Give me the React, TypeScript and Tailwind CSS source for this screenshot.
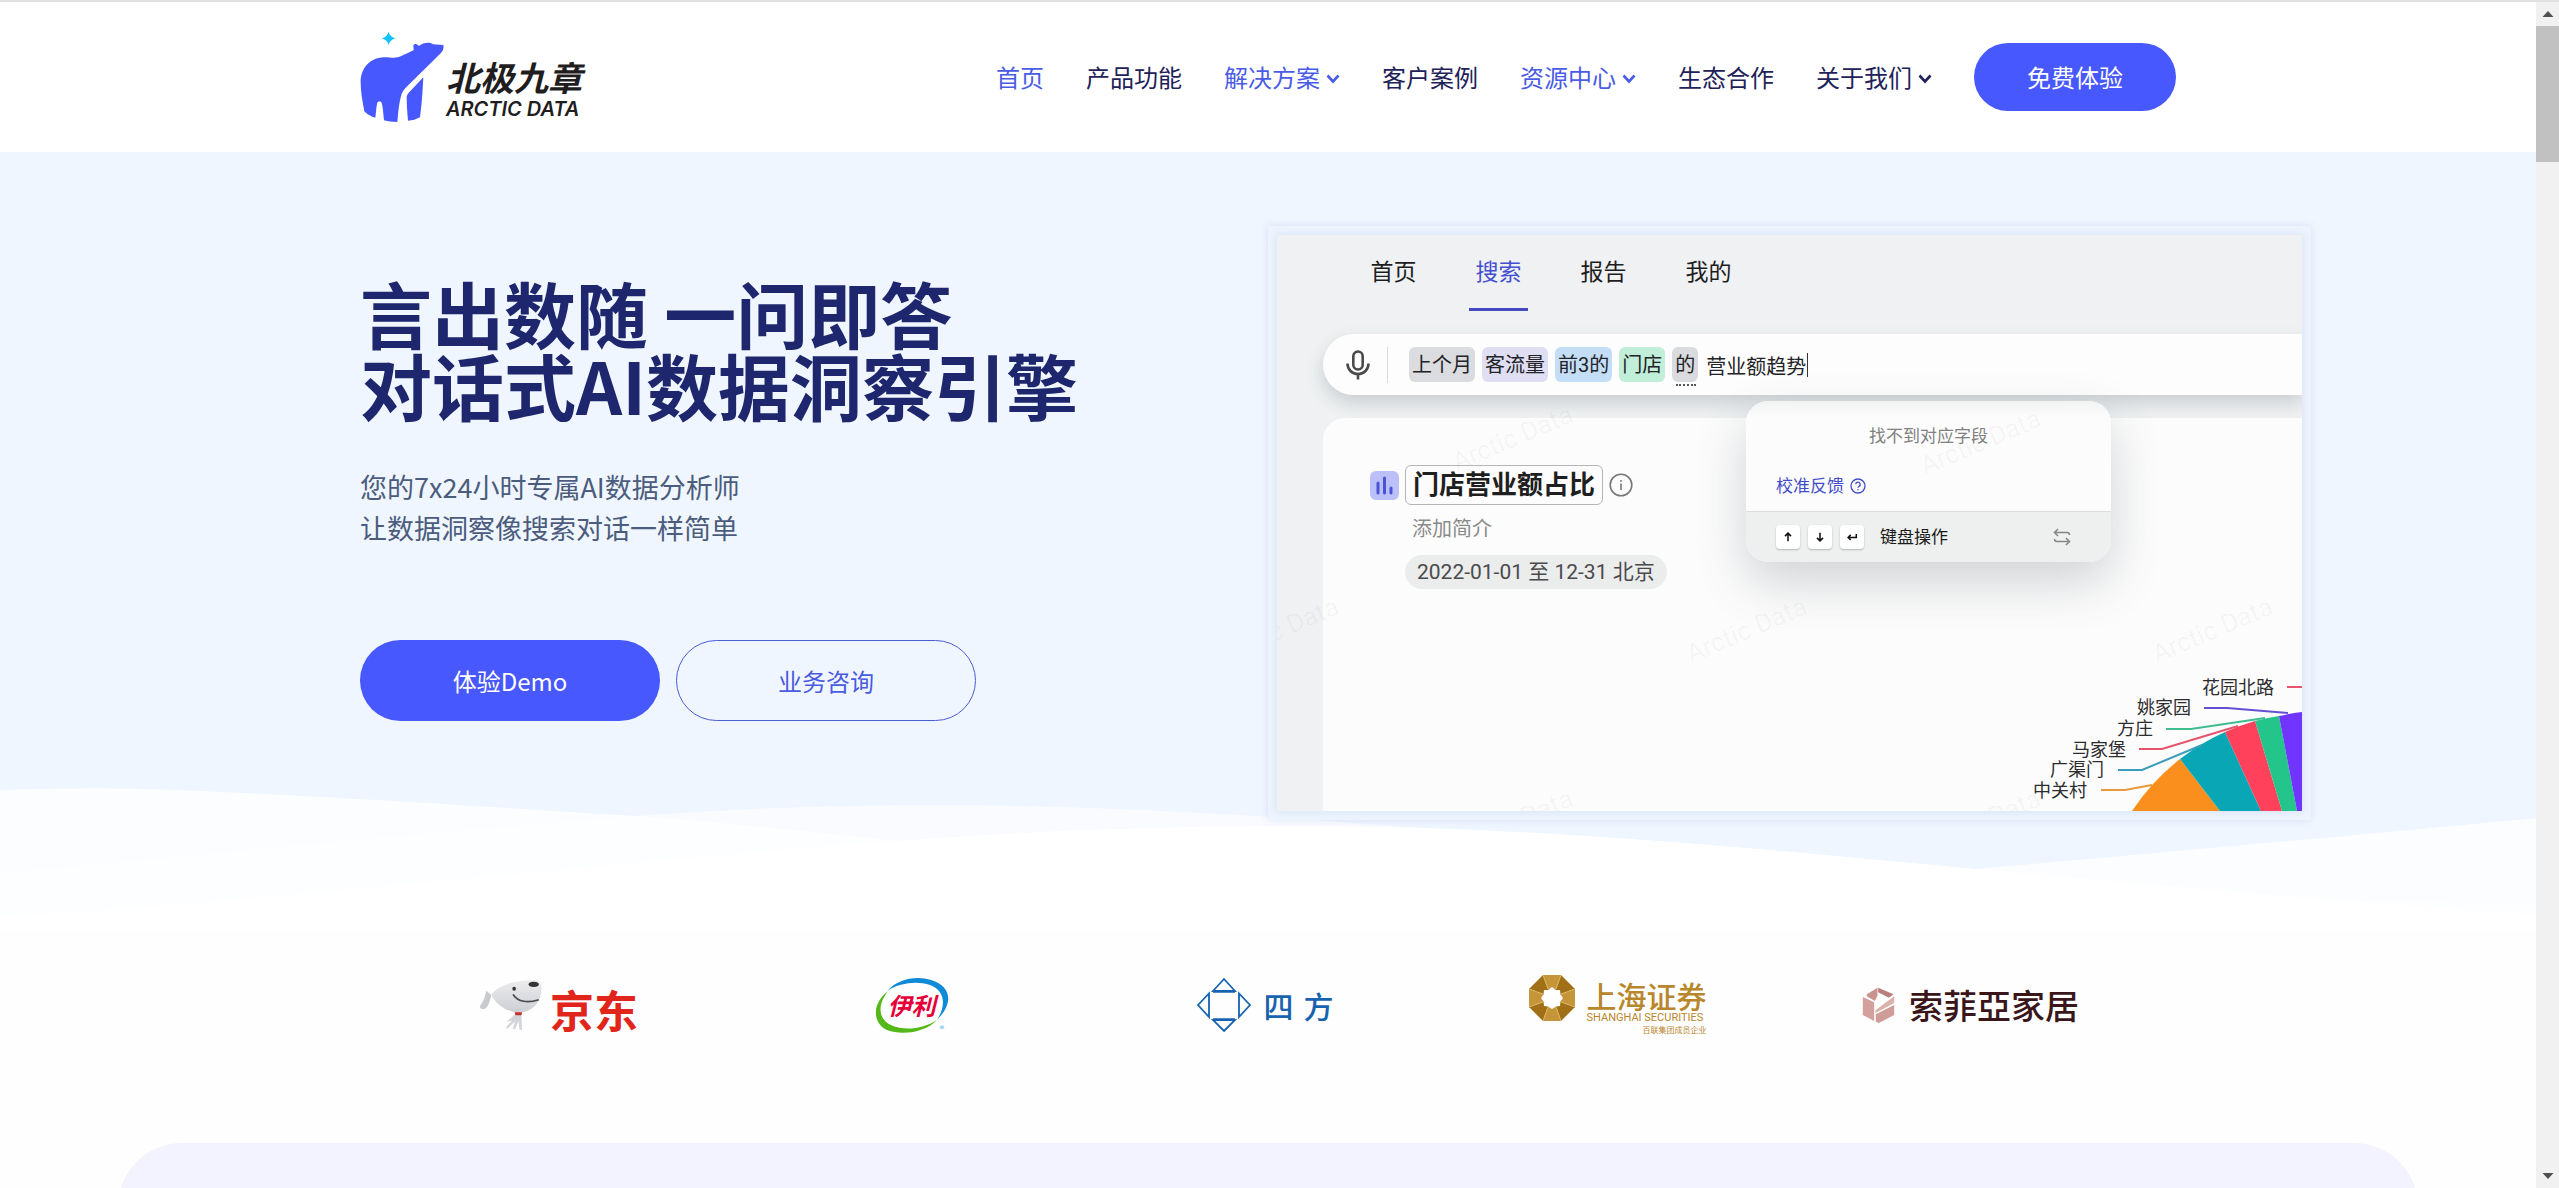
import { useState } from 'react'
import { clsx } from 'clsx'

const navItems = [
  { label: '首页', active: true },
  { label: '产品功能' },
  { label: '解决方案', active: true, menu: true },
  { label: '客户案例' },
  { label: '资源中心', active: true, menu: true },
  { label: '生态合作' },
  { label: '关于我们', menu: true },
]

const tabs = ['首页', '搜索', '报告', '我的']

const chips = [
  { text: '上个月', color: 'bg-[#dadce0]' },
  { text: '客流量', color: 'bg-[#dfdef3]' },
  { text: '前3的', color: 'bg-[#c5def8]' },
  { text: '门店', color: 'bg-[#c0eed8]' },
  { text: '的', color: 'bg-[#d9dbdf]', dotted: true },
]

const pieLabels = [
  { text: '花园北路', x: 244, y: 13, color: '#e8566d', line: '257,12 273,12' },
  { text: '姚家园', x: 161, y: 33, color: '#6450d2', line: '174,33 197,33 258,38' },
  { text: '方庄', x: 123, y: 54, color: '#3fbd8f', line: '136,54 161,54 235,43' },
  { text: '马家堡', x: 96, y: 75, color: '#e4546b', line: '109,74 132,74 208,51' },
  { text: '广渠门', x: 74, y: 95, color: '#3a9ebb', line: '88,95 112,95 172,70' },
  { text: '中关村', x: 57, y: 116, color: '#e99a3c', line: '71,115 95,115 122,110' },
]

const watermarks = [
  { x: 180, y: 236 },
  { x: 648, y: 240 },
  { x: -54, y: 428 },
  { x: 414, y: 428 },
  { x: 880, y: 428 },
  { x: 180, y: 620 },
  { x: 648, y: 620 },
]

function BearMark() {
  return (
    <svg className="w-[86px] h-[93px]" viewBox="61 93 258 279" aria-hidden="true">
      <path
        fill="#11c3fb"
        d="M147 95 Q150 111 168 115 Q150 119 147 136 Q143 119 126 115 Q143 111 147 95Z"
      />
      <path
        fill="#4758fe"
        d="M63 247C63 205 90 174 132 172C152 171 165 177 183 169C199 162 211 155 222 151L221 136C225 129 232 131 238 138C251 128 268 125 280 133L311 135C313 146 310 153 303 160L195 266C181 280 177 322 173 366C158 366 145 364 133 361C131 342 130 322 126 308C124 303 115 303 113 308C109 322 109 340 107 353C95 350 83 344 74 334C68 302 63 275 63 247Z"
      />
      <path
        fill="#4758fe"
        d="M251 232C249 272 246 318 241 352C230 358 218 362 205 362C203 338 201 316 201 291C202 284 205 280 210 275Z"
      />
    </svg>
  )
}

function Chevron() {
  return (
    <svg className="w-3.5 h-2.5 mt-1" viewBox="0 0 14 10" fill="none" stroke="currentColor" strokeWidth="2.6" aria-hidden="true">
      <path d="M1.5 1.5L7 7.5L12.5 1.5" />
    </svg>
  )
}

function Header() {
  return (
    <header className="bg-white border-t-2 border-[#e1e1e1]">
      <div className="max-w-[1816px] h-[150px] mx-auto flex items-center justify-between">
        <a href="#home" className="flex items-end">
          <BearMark />
          <span className="flex flex-col pb-[3px] text-[#1f1d1e] italic">
            <span className="text-[34px] leading-[40px] font-bold">北极九章</span>
            <span className="font-['Inter'] text-xl leading-6 font-semibold">ARCTIC DATA</span>
          </span>
        </a>
        <nav className="flex items-center gap-[42px]">
          {navItems.map((item) => (
            <a
              key={item.label}
              href="#nav"
              className={clsx(
                'flex items-center gap-1.5 text-2xl whitespace-nowrap',
                item.active ? 'text-[#4a5be6]' : 'text-[#1e2259]'
              )}
            >
              {item.label}
              {item.menu && <Chevron />}
            </a>
          ))}
          <button className="w-[202px] h-[68px] rounded-full bg-[#4758fe] text-white text-2xl">免费体验</button>
        </nav>
      </div>
    </header>
  )
}

function Waves() {
  return (
    <svg
      className="absolute left-0 bottom-0 w-full h-[145px]"
      viewBox="0 0 2536 145"
      preserveAspectRatio="none"
      aria-hidden="true"
    >
      <path
        fill="#fff"
        fillOpacity="0.75"
        d="M0 5C60 3 120 2 200 6C380 14 520 24 636 31C730 38 820 48 897 56C1200 90 1700 110 1975 84C2180 66 2380 48 2536 33V145H0Z"
      />
      <path
        fill="#fff"
        fillOpacity="0.6"
        d="M0 88C200 70 440 46 636 31C760 22 850 20 938 20C1100 20 1260 30 1420 43C1700 68 1900 92 2180 108C2330 116 2440 118 2536 118V145H0Z"
      />
      <path
        fill="#fff"
        d="M0 132C280 116 620 76 897 56C1060 44 1190 41 1305 41C1540 41 1780 66 1975 84C2180 102 2380 120 2536 130V145H0Z"
      />
    </svg>
  )
}

function PieChart() {
  return (
    <svg className="absolute right-0 bottom-0 w-[272px] h-[136px]" viewBox="0 0 272 136" role="img" aria-label="门店营业额占比">
      <path fill="#fa8f1e" d="M102 136A221 221 0 0 1 150 84L190 136Z" />
      <path fill="#09a7b6" d="M150 84A221 221 0 0 1 195 57L231 136H190Z" />
      <path fill="#ff415c" d="M195 57A221 221 0 0 1 225 46L252 136H231Z" />
      <path fill="#23c58b" d="M225 46A221 221 0 0 1 249 41L267 136H252Z" />
      <path fill="#7035ff" d="M249 41A221 221 0 0 1 272 37V136H267Z" />
      {pieLabels.map((label) => (
        <g key={label.text}>
          <polyline points={label.line} fill="none" stroke={label.color} strokeWidth="2" />
          <text x={label.x} y={label.y + 6} textAnchor="end" fontSize="18" fill="#2c2c2e">
            {label.text}
          </text>
        </g>
      ))}
    </svg>
  )
}

function Key({ d }: { d: string }) {
  return (
    <kbd className="w-6 h-6 rounded-sm bg-white shadow-[0_1px_2px_rgba(0,0,0,0.25)] flex items-center justify-center">
      <svg className="w-3 h-3" viewBox="0 0 14 14" fill="none" stroke="#111" strokeWidth="1.8" aria-hidden="true">
        <path d={d} />
      </svg>
    </kbd>
  )
}

function FieldPopup() {
  return (
    <div className="absolute left-[469px] top-[166px] w-[365px] rounded-[22px] bg-[#fcfcfc] shadow-[0_20px_50px_rgba(70,80,90,0.24)] overflow-hidden">
      <div className="h-[110px] px-[30px] pt-[23px] bg-linear-to-b from-[#f1f2f2] to-[#fcfcfc] to-15%">
        <p className="text-center text-[17px] leading-6 text-[#808080]">找不到对应字段</p>
        <a href="#feedback" className="mt-[26px] flex items-center gap-1.5 text-[17px] leading-6 text-[#434cc9]">
          校准反馈
          <svg className="w-4 h-4" viewBox="0 0 16 16" fill="none" stroke="currentColor" strokeWidth="1.3" aria-hidden="true">
            <circle cx="8" cy="8" r="7" />
            <path d="M5.8 6.3a2.2 2.2 0 1 1 3.2 2c-.7.4-1 .7-1 1.5M8 11v1.3" />
          </svg>
        </a>
      </div>
      <div className="h-[51px] px-[30px] border-t border-[#dcdddd] bg-[#eef0f0] flex items-center gap-2">
        <Key d="M7 12V2.5M3.5 6L7 2.5L10.5 6" />
        <Key d="M7 2V11.5M3.5 8L7 11.5L10.5 8" />
        <Key d="M12 3.5V7.5H2.5M5.5 4.5L2.5 7.5L5.5 10.5" />
        <span className="ml-2 text-[17px] leading-6 text-[#1a1a1a]">键盘操作</span>
        <svg className="ml-auto mr-2.5 w-[18px] h-[18px]" viewBox="0 0 18 18" fill="none" stroke="#858585" strokeWidth="1.5" aria-hidden="true">
          <path d="M5 1L1.5 4.5L5 8M1.5 4.5H14Q16.5 4.5 16.5 7M13 10L16.5 13.5L13 17M16.5 13.5H4Q1.5 13.5 1.5 11" />
        </svg>
      </div>
    </div>
  )
}

function ProductPreview() {
  const [tab, setTab] = useState('搜索')

  return (
    <div className="w-[1043px] shrink-0 p-[9px] bg-[#edf4fe] shadow-[0_0_8px_rgba(90,110,190,0.16)]">
      <div className="relative h-[576px] overflow-hidden bg-[#eff1f2] shadow-[0_0_8px_rgba(90,110,190,0.16)] font-['Roboto','Noto_Sans_CJK_SC',sans-serif]">
        <div className="flex gap-[46px] pl-[87px] pt-3">
          {tabs.map((name) => (
            <button
              key={name}
              onClick={() => setTab(name)}
              className={clsx(
                'w-[59px] h-16 pb-2 border-b-[3px] text-[23px]',
                tab === name ? 'border-[#4549c0] text-[#434fd0]' : 'border-transparent text-[#1d1d1f]'
              )}
            >
              {name}
            </button>
          ))}
        </div>

        {/* Search bar */}
        <div className="ml-[46px] mt-[23px] h-[61px] pl-[23px] rounded-l-full bg-[#fdfdfd] shadow-[0_8px_18px_rgba(60,70,80,0.2)] flex items-center">
          <svg className="w-6 h-[30px]" viewBox="0 0 24 30" fill="none" stroke="#4a4a4a" strokeWidth="2.6" aria-hidden="true">
            <rect x="7.3" y="1.5" width="9.4" height="18" rx="4.7" />
            <path d="M1.5 13.5c0 6 4.500 10.500 10.500 10.500s10.500-4.500 10.500-10.500M12 24v5.500" />
          </svg>
          <span className="ml-[17px] w-px h-9 bg-[#dcdcdc]" />
          <div className="ml-[21px] flex gap-[7px] text-xl text-[#222326]">
            {chips.map((chip) => (
              <span key={chip.text} className={clsx('relative h-[35px] px-[3px] rounded-md leading-9', chip.color)}>
                {chip.text}
                {chip.dotted && <i className="absolute left-1 right-0.5 -bottom-1 border-b-2 border-dotted border-[#55565a]" />}
              </span>
            ))}
          </div>
          <input
            aria-label="搜索"
            defaultValue="营业额趋势"
            className="ml-2 w-[101px] h-[34px] pt-0.5 text-xl text-[#222326] bg-transparent outline-none"
          />
          <span className="w-px h-6 bg-[#333]" />
        </div>

        {/* Report card */}
        <div className="ml-[46px] mt-[23px] h-[393px] pl-[47px] pt-[47px] rounded-tl-[22px] bg-[#fcfcfc]">
          <div className="flex items-center">
            <svg className="w-[29px] h-[29px]" viewBox="0 0 29 29" aria-hidden="true">
              <rect width="29" height="29" rx="6" fill="#bcc0f8" />
              <path d="M8 12v10M14.500 7v15M21 17v5" stroke="#4a53d6" strokeWidth="3" strokeLinecap="round" />
            </svg>
            <h2 className="ml-1.5 h-10 px-[7px] border border-[#b5b5b5] rounded-md text-[26px] leading-[39px] font-bold text-[#1f1f21]">
              门店营业额占比
            </h2>
            <svg className="ml-1.5 w-6 h-6" viewBox="0 0 24 24" fill="none" stroke="#77787a" strokeWidth="1.6" aria-hidden="true">
              <circle cx="12" cy="12" r="10.800" />
              <path d="M12 10.500v6.500M12 7v1.800" />
            </svg>
          </div>
          <p className="ml-[42px] mt-2 text-xl leading-8 text-[#8a8a8a]">添加简介</p>
          <p className="ml-[35px] mt-2.5 w-fit h-[34px] px-3 rounded-full bg-[#ebecec] text-[21px] leading-[34px] text-[#4a4a4c]">
            2022-01-01 至 12-31 北京
          </p>
        </div>

        <PieChart />
        <FieldPopup />

        <svg className="absolute inset-0 w-full h-full pointer-events-none" viewBox="0 0 1025 576" aria-hidden="true">
          {watermarks.map((mark) => (
            <text
              key={`${mark.x}-${mark.y}`}
              x={mark.x}
              y={mark.y}
              fontSize="26"
              fill="#000"
              fillOpacity="0.035"
              transform={`rotate(-23 ${mark.x} ${mark.y})`}
            >
              Arctic Data
            </text>
          ))}
        </svg>
      </div>
    </div>
  )
}

function Hero() {
  return (
    <section className="relative bg-[#eff6ff] pt-[74px] pb-[110px] overflow-hidden">
      <Waves />
      <div className="relative max-w-[1816px] mx-auto flex">
        <div className="w-1/2 shrink-0 pt-[50px]">
          <h1 className="text-7xl leading-[72px] font-bold text-[#1e266d]">
            言出数随 一问即答
            <br />
            对话式AI数据洞察引擎
          </h1>
          <p className="mt-[46px] text-[27px] leading-[41px] text-[#4b5c7c]">
            您的7x24小时专属AI数据分析师
            <br />
            让数据洞察像搜索对话一样简单
          </p>
          <div className="mt-[92px] flex gap-4">
            <button className="w-[300px] h-[81px] rounded-full bg-[#4758fe] text-white text-2xl">体验Demo</button>
            <button className="w-[300px] h-[81px] rounded-full border border-[#4c5cd2] text-[#4a5be0] text-2xl">业务咨询</button>
          </div>
        </div>
        <ProductPreview />
      </div>
    </section>
  )
}

function JdLogo() {
  return (
    <div className="flex items-center gap-2 text-[#e1251b]">
      <svg className="w-[63px] h-[52px]" viewBox="103 118 174 156" preserveAspectRatio="none" aria-hidden="true">
        <defs>
          <linearGradient id="joy" x1="0" y1="0" x2="0" y2="1">
            <stop offset="0" stopColor="#ececee" />
            <stop offset="1" stopColor="#cdced4" />
          </linearGradient>
        </defs>
        <path fill="#c9cacf" d="M123 153L137 166C134 182 128 204 118 208C110 210 104 205 106 198C114 190 120 170 123 153Z" />
        <path fill="url(#joy)" d="M137 165C155 138 200 120 258 122C272 124 277 135 275 156C272 190 250 216 212 219C180 216 150 195 137 165Z" />
        <path fill="#d4d5da" d="M203 224H220L222 270H215L212 244L203 268H196L203 245L180 268L178 262L194 243L179 246Z" />
        <path fill="#c4302b" d="M201 218H222L220 227H204Z" />
        <ellipse cx="254" cy="134" rx="14" ry="8" fill="#333" />
        <ellipse cx="200" cy="147" rx="5" ry="6" fill="#333" />
        <path d="M197 164C210 188 240 190 268 180" fill="none" stroke="#4a4a4e" strokeWidth="5" />
      </svg>
      <span className="pt-2 text-[44px] leading-[44px] font-bold">京东</span>
    </div>
  )
}

function YiliLogo() {
  return (
    <div className="relative w-[74px] h-14 flex items-center justify-center">
      <svg className="absolute inset-0 w-full h-full" viewBox="1173 107 200 168" preserveAspectRatio="none" aria-hidden="true">
        <path fill="#0f8ad6" d="M1207 148C1235 112 1285 102 1325 116C1380 136 1386 185 1341 235C1366 192 1362 148 1322 131C1285 118 1240 125 1207 148Z" />
        <path fill="#54b818" d="M1208 150C1165 185 1165 245 1205 266C1250 285 1315 270 1340 236C1305 262 1255 270 1217 252C1180 232 1180 190 1208 150Z" />
        <circle cx="1354" cy="258" r="6" fill="#a9d8f0" />
      </svg>
      <span className="relative text-2xl leading-7 font-bold italic text-[#e60039]">伊利</span>
    </div>
  )
}

function SifangLogo() {
  return (
    <div className="flex items-center gap-3 text-[#1763b0]">
      <svg className="w-14 h-14" viewBox="0 0 56 56" fill="none" stroke="currentColor" strokeWidth="1.8" aria-hidden="true">
        <path d="M28 2L39 14H17ZM28 54L39 43H17ZM2 28L13 16.500V40ZM54 28L43 16.500V40Z" />
        <path d="M17 14.500H39M17 42.500H39" strokeWidth="2.600" />
      </svg>
      <span className="flex gap-[10px] text-[30px] leading-8 font-medium">
        <span>四</span>
        <span>方</span>
      </span>
    </div>
  )
}

function ShanghaiLogo() {
  return (
    <div className="flex items-start gap-3 text-[#b8862b]">
      <svg className="w-[46px] h-[46px]" viewBox="0 0 46 46" aria-hidden="true">
        <path fill="#a06f16" d="M14 0H32L46 14V32L32 46H14L0 32V14Z" />
        <path fill="#c5953a" d="M14 0H32L27 14H19ZM46 14V32L32 27V19ZM32 46H14L19 32H27ZM0 32V14L14 19V27Z" />
        <path
          d="M14 0L19 14M32 0L27 14M46 14L32 19M46 32L32 27M32 46L27 32M14 46L19 32M0 32L14 27M0 14L14 19"
          stroke="#dfb86c"
          strokeWidth="1"
        />
        <path fill="#fff" d="M23 12L27 15L31 15L31.500 19.500L34 23L31.500 26.500L31 31L27 31.500L23 34L19 31.500L15 31L14.500 26.500L12 23L14.500 19.500L15 15L19 15Z" />
      </svg>
      <div className="flex flex-col">
        <span className="pt-1 text-[30px] leading-8 font-medium">上海证券</span>
        <span className="font-['Roboto'] text-[11px] leading-[13px]">SHANGHAI SECURITIES</span>
        <span className="self-end text-[8px] leading-3">百联集团成员企业</span>
      </div>
    </div>
  )
}

function SofiaLogo() {
  return (
    <div className="flex items-center gap-[14px] text-[#3a161b]">
      <svg className="w-[33px] h-9" viewBox="132 138 98 108" aria-hidden="true">
        <path fill="#d3a09c" d="M134 168L168 184V240L134 222Z" />
        <path fill="#c99490" d="M146 160L178 140V164L170 180L146 166Z" />
        <path fill="#b87f7c" d="M180 140L226 160L212 170L180 154Z" />
        <path fill="#dcb0ab" d="M228 166V186L172 216V208Z" />
        <path fill="#cf9c98" d="M228 192V222L182 246L173 242V220Z" />
      </svg>
      <span className="text-[34px] leading-10 font-medium font-['Noto_Sans_CJK_TC',sans-serif]">索菲亞家居</span>
    </div>
  )
}

function Clients() {
  return (
    <section className="bg-[#fefefe] pt-[44px] pb-[107px]">
      <ul className="max-w-[1816px] mx-auto pl-[22px] pr-[29px] h-[62px] grid grid-cols-5 items-center justify-items-center">
        <li><JdLogo /></li>
        <li><YiliLogo /></li>
        <li><SifangLogo /></li>
        <li><ShanghaiLogo /></li>
        <li><SofiaLogo /></li>
      </ul>
    </section>
  )
}

function ScrollRail() {
  return (
    <div className="w-[23px] shrink-0 bg-[#f1f1f1] border-t-2 border-[#e1e1e1] flex flex-col items-center py-2" aria-hidden="true">
      <svg className="w-3 h-2" viewBox="0 0 12 8">
        <path d="M6 1L11.500 7H0.500Z" fill="#505050" />
      </svg>
      <div className="mt-2 w-full h-[136px] bg-[#c1c1c1]" />
      <svg className="mt-auto w-3 h-2" viewBox="0 0 12 8">
        <path d="M6 7L11.500 1H0.500Z" fill="#505050" />
      </svg>
    </div>
  )
}

export default function App() {
  return (
    <div className="h-screen flex overflow-hidden bg-[#fefefe] font-['Noto_Sans_CJK_SC',sans-serif]">
      <main className="flex-1 min-w-0 overflow-hidden">
        <Header />
        <Hero />
        <Clients />
        <section className="mx-[118px] h-96 rounded-t-[64px] bg-[#f3f2ff]" />
      </main>
      <ScrollRail />
    </div>
  )
}
